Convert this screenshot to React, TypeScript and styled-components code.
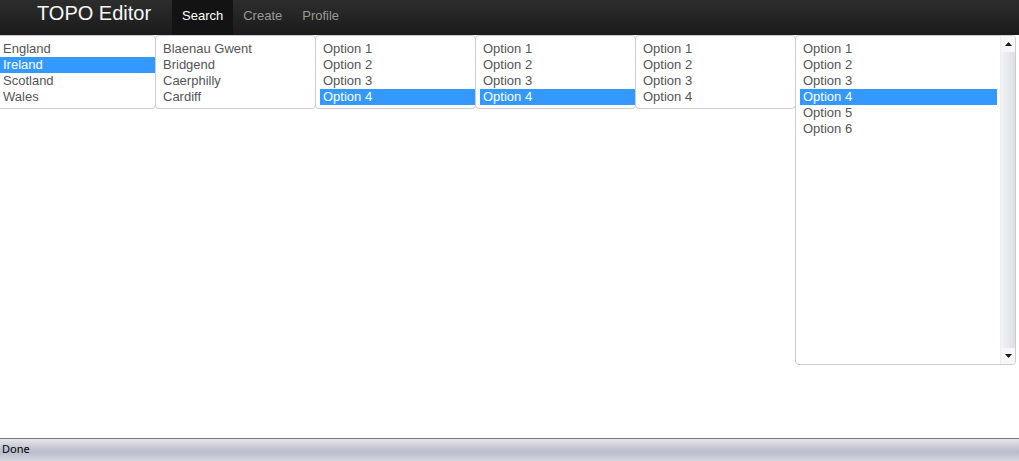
import * as React from "react";
import styled, { createGlobalStyle } from "styled-components";

const GlobalStyle = createGlobalStyle`
  html, body {
    margin: 0;
    padding: 0;
    height: 100%;
    background: #fff;
    overflow: hidden;
  }
  #root {
    height: 100%;
  }
`;

const Page = styled.div`
  height: 100vh;
  display: flex;
  flex-direction: column;
  font-family: "Liberation Sans", Arial, sans-serif;
`;

const Navbar = styled.div`
  height: 35px;
  flex: none;
  display: flex;
  align-items: flex-start;
  background: linear-gradient(#2d2d2d, #1a1a1a);
`;

const Brand = styled.div`
  margin-left: 37px;
  padding-top: 3px;
  line-height: 20px;
  font-size: 20px;
  color: #f7f7f7;
  width: 125px;
`;

const Nav = styled.div`
  display: flex;
  margin-left: 10px;
`;

const NavLink = styled.div<{ $active?: boolean }>`
  height: 35px;
  box-sizing: border-box;
  padding: 6px 10px 0;
  line-height: 19px;
  font-size: 13px;
  color: ${(p) => (p.$active ? "#ffffff" : "#999999")};
  background: ${(p) => (p.$active ? "#131313" : "transparent")};
`;

const Content = styled.div`
  flex: 1;
  display: flex;
  align-items: flex-start;
  margin-left: -5px;
`;

const SelectBox = styled.div<{ $tall?: boolean }>`
  box-sizing: border-box;
  width: ${(p) => (p.$tall ? "221px" : "161px")};
  height: ${(p) => (p.$tall ? "330px" : "74px")};
  margin-right: -1px;
  border: 1px solid #cccccc;
  border-radius: 4px;
  background: #fff;
  overflow: hidden;
  display: flex;
`;

const List = styled.div<{ $tall?: boolean }>`
  flex: 1;
  padding: ${(p) => (p.$tall ? "5px 3px 4px 4px" : "5px 0 4px 4px")};
`;

const Option = styled.div<{ $selected?: boolean }>`
  height: 16px;
  line-height: 16px;
  padding-left: 3px;
  font-size: 13px;
  white-space: nowrap;
  color: ${(p) => (p.$selected ? "#ffffff" : "#555555")};
  background: ${(p) => (p.$selected ? "#3399ff" : "transparent")};
`;

const Scrollbar = styled.div`
  width: 14px;
  flex: none;
  display: flex;
  flex-direction: column;
  justify-content: space-between;
  background: linear-gradient(to right, #f3f3f5, #dde0e8);
  border-left: 1px solid #eceef2;
`;

const ArrowButton = styled.div`
  height: 16px;
  display: flex;
  align-items: center;
  justify-content: center;
  background: #f7f7f9;
`;

const StatusBar = styled.div`
  height: 22px;
  flex: none;
  border-top: 1px solid #7c7c7c;
  background: linear-gradient(#e6e7ec 0%, #c9cbd6 35%, #b9bccb 60%, #d6d8e0 100%);
  font-family: "Noto Sans", "DejaVu Sans", sans-serif;
  font-size: 11px;
  line-height: 20px;
  padding-left: 2px;
  color: #000;
`;

type Column = { items: string[]; selected?: number; tall?: boolean };

const options = ["Option 1", "Option 2", "Option 3", "Option 4", "Option 5", "Option 6"];

const columns: Column[] = [
  { items: ["England", "Ireland", "Scotland", "Wales"], selected: 1 },
  { items: ["Blaenau Gwent", "Bridgend", "Caerphilly", "Cardiff", "Carmarthenshire"] },
  { items: options.slice(0, 5), selected: 3 },
  { items: options.slice(0, 5), selected: 3 },
  { items: options.slice(0, 5) },
  { items: options, selected: 3, tall: true },
];

const Triangle = ({ down }: { down?: boolean }) => (
  <svg width="7" height="4" viewBox="0 0 7 4">
    <path d={down ? "M0 0 L7 0 L3.5 4 Z" : "M0 4 L7 4 L3.5 0 Z"} fill="#1a1a1a" />
  </svg>
);

export default function App() {
  return (
    <Page>
      <GlobalStyle />
      <Navbar>
        <Brand>TOPO Editor</Brand>
        <Nav>
          <NavLink $active>Search</NavLink>
          <NavLink>Create</NavLink>
          <NavLink>Profile</NavLink>
        </Nav>
      </Navbar>

      <Content>
        {columns.map((col, i) => (
          <SelectBox key={i} $tall={col.tall}>
            <List $tall={col.tall}>
              {col.items.map((item, j) => (
                <Option key={j} $selected={col.selected === j}>
                  {item}
                </Option>
              ))}
            </List>
            {col.tall && (
              <Scrollbar>
                <ArrowButton>
                  <Triangle />
                </ArrowButton>
                <ArrowButton>
                  <Triangle down />
                </ArrowButton>
              </Scrollbar>
            )}
          </SelectBox>
        ))}
      </Content>

      <StatusBar>Done</StatusBar>
    </Page>
  );
}
